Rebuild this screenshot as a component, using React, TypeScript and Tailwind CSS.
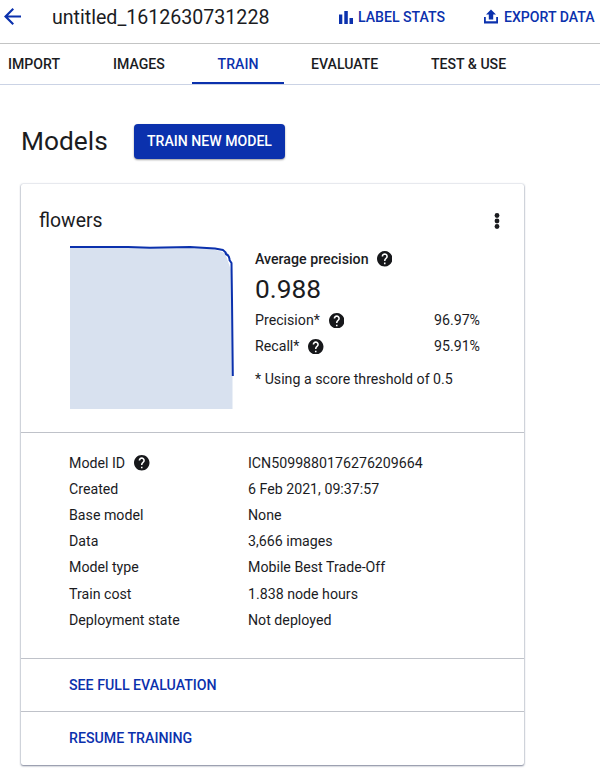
import React from "react";

function HelpIcon({ className = "" }: { className?: string }) {
  return (
    <svg viewBox="2 2 20 20" className={`-mt-px size-[15.5px] shrink-0 fill-[#17181b] ${className}`}>
      <path d="M12 2C6.48 2 2 6.48 2 12s4.48 10 10 10 10-4.48 10-10S17.52 2 12 2zm1 17h-2v-2h2v2zm2.07-7.75l-.9.92C13.45 12.9 13 13.5 13 15h-2v-.5c0-1.1.45-2.1 1.17-2.83l1.24-1.26c.37-.36.59-.86.59-1.41 0-1.1-.9-2-2-2s-2 .9-2 2H8c0-2.21 1.79-4 4-4s4 1.79 4 4c0 .88-.36 1.68-.93 2.25z" />
    </svg>
  );
}

function Header() {
  return (
    <header className="flex h-11 items-start border-b border-[#c3c4c4] text-[#0b31ad]">
      <svg viewBox="4 4 16 16" className="mt-2 ml-1 size-[17px] fill-current">
        <path d="M20 11H7.83l5.59-5.59L12 4l-8 8 8 8 1.41-1.41L7.83 13H20v-2z" />
      </svg>
      <h1 className="ml-[31px] w-[286px] text-[19.6px] leading-[36px] text-[#1b1c1f]">untitled_1612630731228</h1>
      <div className="flex w-[146px] items-start">
        <svg viewBox="0 0 15 13" className="mt-[11px] mr-[5px] h-[13px] w-[15px] fill-current">
          <path d="M1 3.500h3.300v9.500H1zM6.300 0h3.500v13h-3.500zM11.500 7H15V13h-3.500z" />
        </svg>
        <span className="text-[14.1px] leading-[34px] font-medium">LABEL STATS</span>
      </div>
      <svg viewBox="0 0 14 15" className="mt-[9px] mr-[6px] h-[15px] w-[14px] shrink-0 fill-current">
        <path d="M7 0.500l5 5H9.200v5H4.800V5.500H2z" />
        <path d="M0 8h1.800v4.300h10.400V8H14v6.500H0z" />
      </svg>
      <span className="text-[14.1px] leading-[34px] font-medium whitespace-nowrap">EXPORT DATA</span>
    </header>
  );
}

function Tabs() {
  return (
    <nav className="flex h-[41px] border-b border-[#cbd3e5] text-[14.1px] leading-[40px] font-medium whitespace-nowrap text-[#1b1c1f]">
      <span className="w-[105px] pl-2">IMPORT</span>
      <span className="w-[87px] pl-2">IMAGES</span>
      <span className="w-[92px] border-b-2 border-[#0b31ad] text-center text-[#0b31ad]">TRAIN</span>
      <span className="w-[147px] pl-[27px]">EVALUATE</span>
      <span>TEST &amp; USE</span>
    </nav>
  );
}

function PrecisionChart() {
  return (
    <svg viewBox="0 0 164 164" className="ml-[49px] h-[164px] w-[164px] shrink-0">
      <path d="M0 2H70L140 3L155 8L161 25L162.500 132V164H0z" fill="#d8e1ef" />
      <path
        d="M0 2H58L80 2.700L120 2L145 3.500L153 5Q156 7 156 9Q160 11 159.500 15L161.500 18L162 55L162.800 131"
        fill="none"
        stroke="#0b31ad"
        strokeWidth="2"
      />
    </svg>
  );
}

function Metric({ label, value }: { label: string; value: string }) {
  return (
    <div className="flex h-[26px] items-center">
      <span>{label}</span>
      <HelpIcon className="ml-[9px]" />
      <span className="mr-[44px] ml-auto">{value}</span>
    </div>
  );
}

const details = [
  ["Model ID", "ICN5099880176276209664"],
  ["Created", "6 Feb 2021, 09:37:57"],
  ["Base model", "None"],
  ["Data", "3,666 images"],
  ["Model type", "Mobile Best Trade-Off"],
  ["Train cost", "1.838 node hours"],
  ["Deployment state", "Not deployed"],
];

function ModelCard() {
  return (
    <section className="mt-[25px] ml-[21px] h-[581px] w-[503px] rounded-[2px] text-[14.2px] shadow-[0_1px_2px_rgba(40,50,80,0.55),0_0_2px_rgba(60,80,120,0.35)]">
      <div className="h-[248px]">
        <div className="flex h-[61px] items-start justify-between pt-[19px] pl-[18px]">
          <h2 className="text-[19.4px] leading-[35px]">flowers</h2>
          <svg viewBox="0 0 6 16" className="mt-[10px] mr-6 h-4 w-[6px] fill-[#1b1c1f]">
            <circle cx="3" cy="2.500" r="2.400" />
            <circle cx="3" cy="8" r="2.400" />
            <circle cx="3" cy="13.500" r="2.400" />
          </svg>
        </div>
        <div className="flex">
          <PrecisionChart />
          <div className="ml-[21px] w-[269px]">
            <div className="flex h-7 items-center pt-px">
              <span className="font-medium">Average precision</span>
              <HelpIcon className="ml-2" />
            </div>
            <div className="mb-[3px] h-[32px] text-[26.3px] leading-[32px]">0.988</div>
            <Metric label="Precision*" value="96.97%" />
            <Metric label="Recall*" value="95.91%" />
            <p className="mt-[6px] leading-[26px]">* Using a score threshold of 0.5</p>
          </div>
        </div>
      </div>
      <dl className="h-[226px] border-t border-[#bfc2c9] pt-[17.300px] pl-12">
        {details.map(([name, value]) => (
          <div key={name} className="flex h-[26.200px] items-center">
            <dt className="flex w-[179px] items-center">
              {name}
              {name === "Model ID" && <HelpIcon className="ml-[9px]" />}
            </dt>
            <dd>{value}</dd>
          </div>
        ))}
      </dl>
      <div className="h-[53px] border-t border-[#bfc2c9] pl-12 leading-[52px] font-medium text-[#0b31ad]">SEE FULL EVALUATION</div>
      <div className="h-[54px] border-t border-[#bfc2c9] pl-12 leading-[53px] font-medium text-[#0b31ad]">RESUME TRAINING</div>
    </section>
  );
}

export default function App() {
  return (
    <main className="h-[769px] w-[600px] overflow-hidden bg-white font-['Roboto',sans-serif] text-[#1b1c1f]">
      <Header />
      <Tabs />
      <div className="mt-[38px] ml-[21px] flex h-[36px] items-center">
        <h2 className="w-[113px] text-[26.3px] leading-[36px]">Models</h2>
        <button className="h-[35px] w-[151px] rounded-[4px] bg-[#0b31ad] pt-px text-[14.1px] font-medium whitespace-nowrap text-white shadow-[0_1px_2px_rgba(0,0,0,0.4)]">
          TRAIN NEW MODEL
        </button>
      </div>
      <ModelCard />
    </main>
  );
}
